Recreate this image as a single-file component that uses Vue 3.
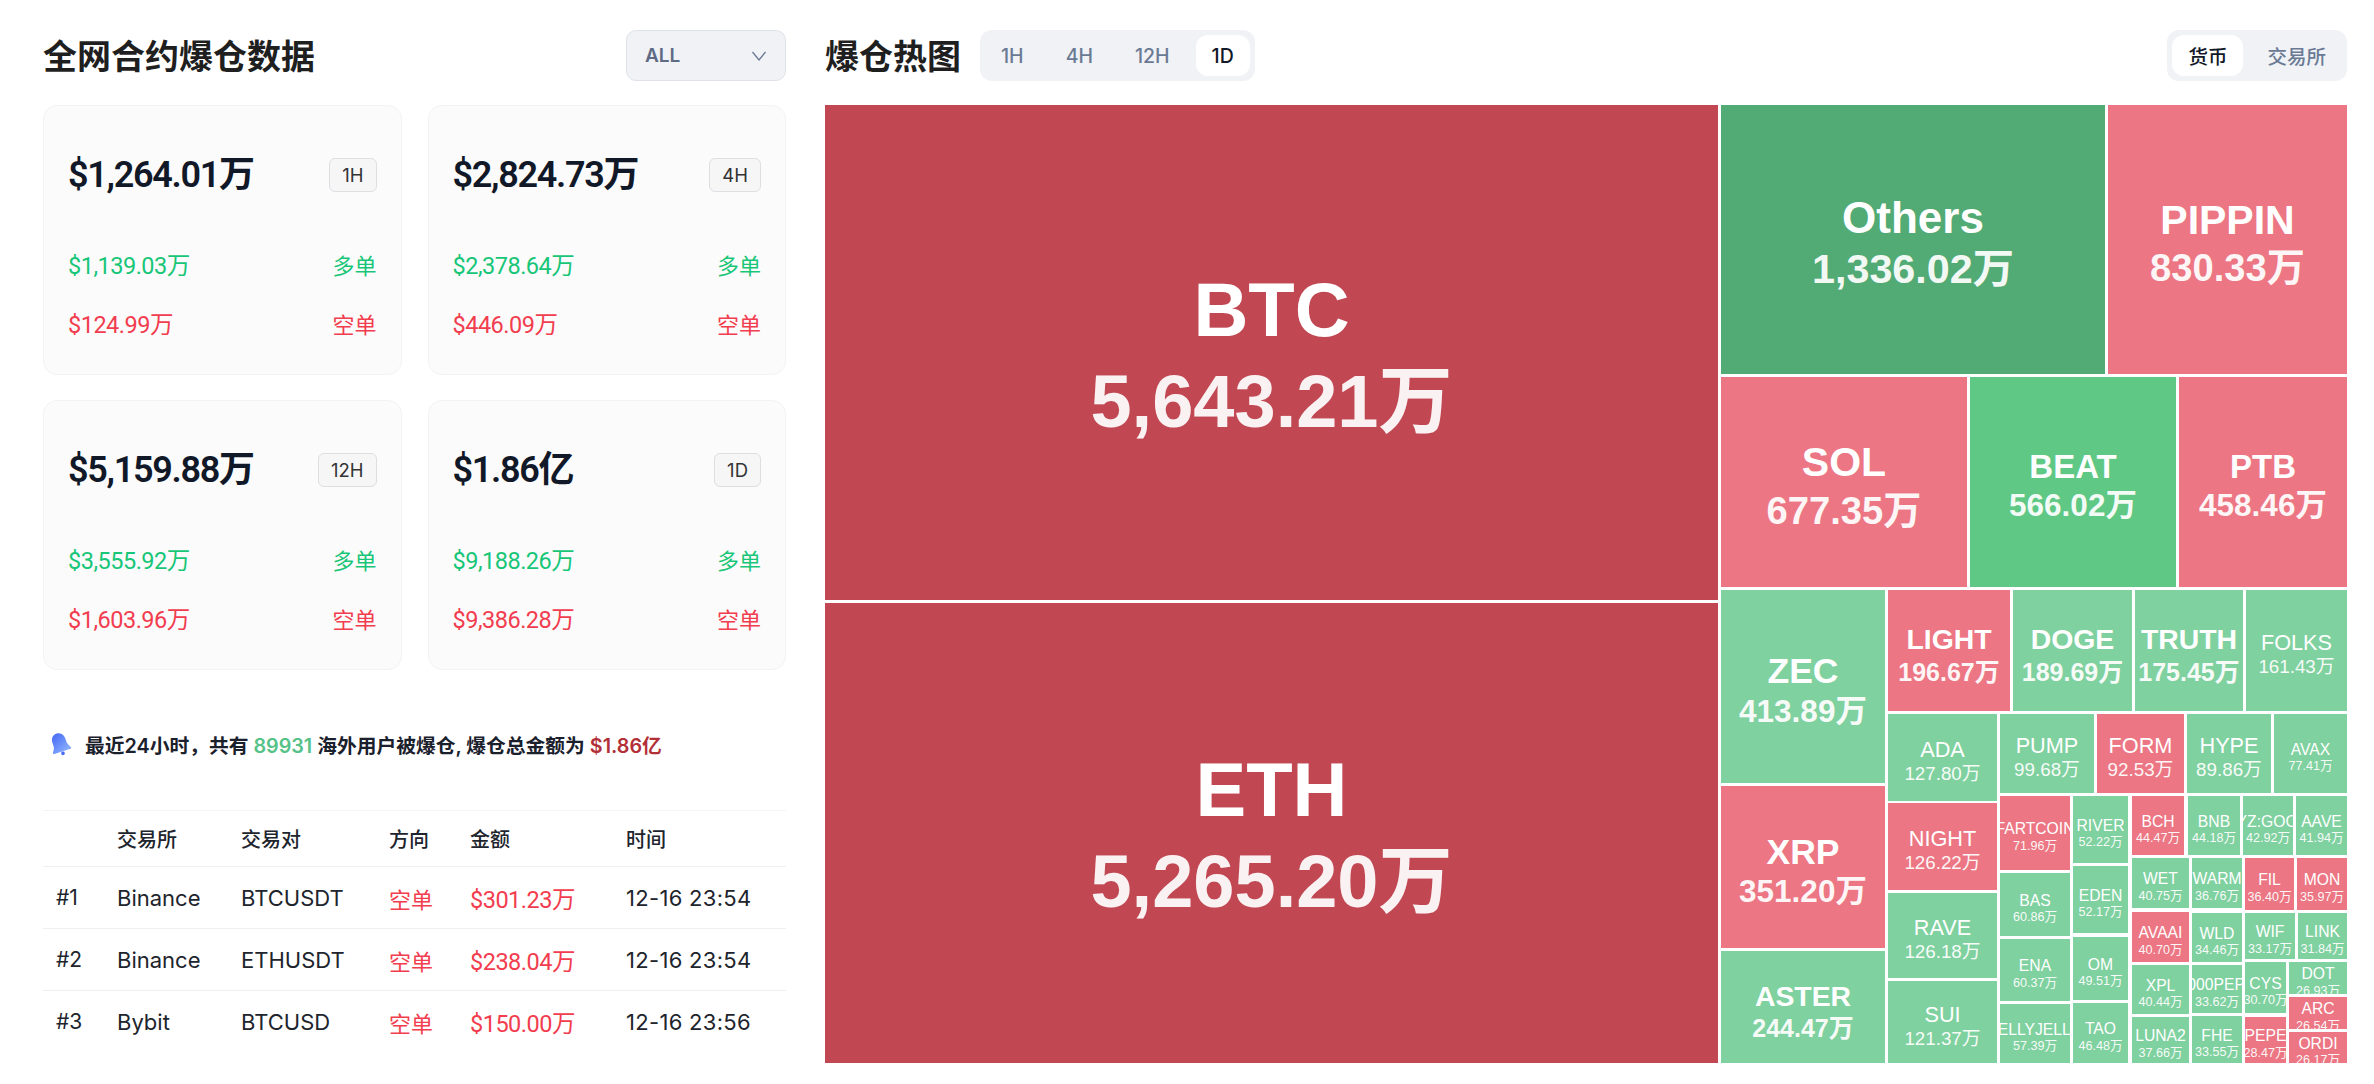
<template>
  <div class="page">
    <section class="left">
      <header class="head">
        <h2 class="title">全网合约爆仓数据</h2>
        <div class="select">
          <span>ALL</span>
          <svg class="chev" width="16" height="10" viewBox="0 0 16 10"><path d="M1.5 1 L8 9 L14.5 1" fill="none" stroke="#6b7a94" stroke-width="1.3" /></svg>
        </div>
      </header>

      <div class="cards">
        <div v-for="c in cards" :key="c.tag" class="card">
          <div class="card-top">
            <span class="amount">{{ c.total }}</span>
            <span class="badge">{{ c.tag }}</span>
          </div>
          <div class="card-row long"><span class="num">{{ c.long }}</span><span class="lab">多单</span></div>
          <div class="card-row short"><span class="num">{{ c.short }}</span><span class="lab">空单</span></div>
        </div>
      </div>

      <div class="notice">
        <svg class="bell" width="22" height="24" viewBox="0 0 22 24">
          <defs>
            <linearGradient id="bellFill" x1="0.2" y1="0" x2="0.7" y2="1">
              <stop offset="0" stop-color="#4668f6" />
              <stop offset="1" stop-color="#86aafc" />
            </linearGradient>
          </defs>
          <g transform="rotate(-18 11 12)">
            <path fill="url(#bellFill)" d="M11 1 C6.6 1 4.2 4.2 4.2 8.4 V12.2 C4.2 14.6 2.6 16.6 1.6 18.2 C1.2 19 1.6 19.8 2.6 19.8 H19.4 C20.4 19.8 20.8 19 20.4 18.2 C19.4 16.6 17.8 14.6 17.8 12.2 V8.4 C17.8 4.2 15.4 1 11 1 Z" />
            <circle cx="11" cy="21.8" r="1.8" fill="#4a6cf6" />
          </g>
        </svg>
        <span>最近24小时，共有 <b class="cnt">89931</b> 海外用户被爆仓, 爆仓总金额为 <b class="sum">$1.86亿</b></span>
      </div>

      <table class="tbl">
        <thead>
          <tr><th class="c0"></th><th class="c1">交易所</th><th class="c2">交易对</th><th class="c3">方向</th><th class="c4">金额</th><th>时间</th></tr>
        </thead>
        <tbody>
          <tr v-for="r in rows" :key="r.rank">
            <td>{{ r.rank }}</td>
            <td>{{ r.ex }}</td>
            <td>{{ r.pair }}</td>
            <td class="red cjk">空单</td>
            <td class="red num">{{ r.amt }}</td>
            <td class="time">{{ r.time }}</td>
          </tr>
        </tbody>
      </table>
    </section>

    <section class="right">
      <header class="head">
        <div class="head-l">
          <h2 class="title">爆仓热图</h2>
          <div class="tabs">
            <span v-for="t in ['1H', '4H', '12H', '1D']" :key="t" class="tab" :class="{ on: t === '1D' }">{{ t }}</span>
          </div>
        </div>
        <div class="tabs tabs-cjk">
          <span class="tab on">货币</span>
          <span class="tab">交易所</span>
        </div>
      </header>

      <div class="map">
        <div
          v-for="n in nodes"
          :key="n.name"
          class="node"
          :class="[n.color, 't' + n.tier]"
          :style="boxOf(n)"
        >
          <span class="nm">{{ n.name }}</span>
          <span class="vl">{{ n.value }}</span>
        </div>
      </div>
    </section>
  </div>
</template>

<script setup>
const cards = [
  { tag: '1H', total: '$1,264.01万', long: '$1,139.03万', short: '$124.99万' },
  { tag: '4H', total: '$2,824.73万', long: '$2,378.64万', short: '$446.09万' },
  { tag: '12H', total: '$5,159.88万', long: '$3,555.92万', short: '$1,603.96万' },
  { tag: '1D', total: '$1.86亿', long: '$9,188.26万', short: '$9,386.28万' }
]

const rows = [
  { rank: '#1', ex: 'Binance', pair: 'BTCUSDT', amt: '$301.23万', time: '12-16 23:54' },
  { rank: '#2', ex: 'Binance', pair: 'ETHUSDT', amt: '$238.04万', time: '12-16 23:54' },
  { rank: '#3', ex: 'Bybit', pair: 'BTCUSD', amt: '$150.00万', time: '12-16 23:56' }
]

// treemap cells: name, value, x0, y0, x1, y1 (page px), colour, text tier
const raw = [
  ['BTC', '5,643.21万', 825, 105, 1718, 600, 'dred', 76],
  ['ETH', '5,265.20万', 825, 603, 1718, 1063, 'dred', 76],
  ['Others', '1,336.02万', 1721, 105, 2105, 374, 'dgreen', 44],
  ['PIPPIN', '830.33万', 2108, 105, 2347, 374, 'pink', 41],
  ['SOL', '677.35万', 1721, 377, 1967, 587, 'pink', 41],
  ['BEAT', '566.02万', 1970, 377, 2176, 587, 'mgreen', 33],
  ['PTB', '458.46万', 2179, 377, 2347, 587, 'pink', 33],
  ['ZEC', '413.89万', 1721, 590, 1885, 783, 'green', 35],
  ['XRP', '351.20万', 1721, 786, 1885, 948, 'pink', 35],
  ['ASTER', '244.47万', 1721, 951, 1885, 1063, 'green', 28],
  ['LIGHT', '196.67万', 1888, 590, 2010, 711, 'pink', 28],
  ['DOGE', '189.69万', 2013, 590, 2132, 711, 'green', 28],
  ['TRUTH', '175.45万', 2135, 590, 2243, 711, 'green', 28],
  ['FOLKS', '161.43万', 2246, 590, 2347, 711, 'green', 22],
  ['ADA', '127.80万', 1888, 714, 1997, 801, 'green', 22],
  ['NIGHT', '126.22万', 1888, 803, 1997, 890, 'pink', 22],
  ['RAVE', '126.18万', 1888, 893, 1997, 978, 'green', 22],
  ['SUI', '121.37万', 1888, 981, 1997, 1063, 'green', 22],
  ['PUMP', '99.68万', 2000, 714, 2094, 793, 'green', 22],
  ['FORM', '92.53万', 2097, 714, 2184, 793, 'pink', 22],
  ['HYPE', '89.86万', 2187, 714, 2271, 793, 'green', 22],
  ['AVAX', '77.41万', 2274, 714, 2347, 793, 'green', 15],
  ['FARTCOIN', '71.96万', 2000, 796, 2070, 870, 'pink', 15],
  ['BAS', '60.86万', 2000, 873, 2070, 936, 'green', 15],
  ['ENA', '60.37万', 2000, 939, 2070, 1001, 'green', 15],
  ['JELLYJELLY', '57.39万', 2000, 1004, 2070, 1063, 'green', 15],
  ['RIVER', '52.22万', 2073, 796, 2128, 863, 'green', 15],
  ['EDEN', '52.17万', 2073, 866, 2128, 933, 'green', 15],
  ['OM', '49.51万', 2073, 937, 2128, 1000, 'green', 15],
  ['TAO', '46.48万', 2073, 1003, 2128, 1063, 'green', 15],
  ['BCH', '44.47万', 2132, 796, 2184, 855, 'pink', 15],
  ['BNB', '44.18万', 2188, 796, 2240, 855, 'green', 15],
  ['XYZ:GOOG', '42.92万', 2243, 796, 2293, 855, 'green', 15],
  ['AAVE', '41.94万', 2296, 796, 2347, 855, 'green', 15],
  ['WET', '40.75万', 2132, 858, 2189, 908, 'green', 15],
  ['WARM', '36.76万', 2192, 858, 2242, 908, 'green', 15],
  ['FIL', '36.40万', 2245, 858, 2294, 910, 'pink', 15],
  ['MON', '35.97万', 2297, 858, 2347, 910, 'pink', 15],
  ['AVAAI', '40.70万', 2132, 912, 2189, 962, 'pink', 15],
  ['WLD', '34.46万', 2192, 913, 2242, 962, 'green', 15],
  ['WIF', '33.17万', 2245, 913, 2295, 959, 'green', 15],
  ['LINK', '31.84万', 2298, 913, 2347, 959, 'green', 15],
  ['XPL', '40.44万', 2132, 965, 2189, 1014, 'green', 15],
  ['1000PEPE', '33.62万', 2192, 965, 2242, 1013, 'green', 15],
  ['CYS', '30.70万', 2245, 962, 2286, 1013, 'green', 15],
  ['DOT', '26.93万', 2289, 962, 2347, 994, 'green', 15],
  ['ARC', '26.54万', 2289, 997, 2347, 1029, 'pink', 15],
  ['ORDI', '26.17万', 2289, 1032, 2347, 1063, 'pink', 15],
  ['PEPE', '28.47万', 2245, 1017, 2286, 1063, 'pink', 15],
  ['LUNA2', '37.66万', 2132, 1017, 2189, 1063, 'green', 15],
  ['FHE', '33.55万', 2192, 1016, 2242, 1063, 'green', 15]
]

const nodes = raw.map(([name, value, x0, y0, x1, y1, color, tier]) => ({ name, value, x0, y0, x1, y1, color, tier }))

const boxOf = (n) => ({
  left: n.x0 - 825 + 'px',
  top: n.y0 - 105 + 'px',
  width: n.x1 - n.x0 + 'px',
  height: n.y1 - n.y0 + 'px'
})
</script>

<style>
html, body { background: #fff; overflow: hidden; }
</style>

<style scoped>
.page {
  display: flex;
  gap: 39px;
  padding: 30px 27px 21px 43px;
  width: 2374px;
  height: 1084px;
  box-sizing: border-box;
  font-family: Inter, "Noto Sans CJK SC", sans-serif;
  color: #1a202c;
}
.left { width: 743px; flex: none; }
.right { flex: 1; min-width: 0; }

.head {
  display: flex;
  align-items: center;
  justify-content: space-between;
  height: 51px;
  margin-bottom: 24px;
}
.head-l { display: flex; align-items: center; gap: 19px; }
.title {
  margin: -2px 0 0;
  font-size: 34px;
  font-weight: 700;
  color: #1f1f1f;
  font-family: "Noto Sans CJK SC", sans-serif;
  line-height: 51px;
}

.select {
  width: 160px;
  height: 51px;
  box-sizing: border-box;
  background: #f0f2f6;
  border: 1px solid #dfe2e8;
  border-radius: 10px;
  padding: 0 18px;
  display: flex;
  align-items: center;
  justify-content: space-between;
  font-size: 19px;
  font-weight: 600;
  color: #5f6b85;
}

.cards {
  display: grid;
  grid-template-columns: 358.5px 358.5px;
  grid-auto-rows: 270px;
  gap: 25px 26px;
}
.card {
  background: #fbfbfc;
  border: 1px solid #f2f3f5;
  border-radius: 14px;
  padding: 0 24px;
}
.card-top {
  display: flex;
  align-items: center;
  justify-content: space-between;
  height: 34px;
  margin-top: 52px;
  margin-bottom: 57px;
}
.amount {
  font-family: Roboto, "Noto Sans CJK SC", sans-serif;
  font-size: 36px;
  font-weight: 600;
  letter-spacing: -1.3px;
  line-height: 34px;
  color: #111827;
}
.badge {
  height: 34px;
  box-sizing: border-box;
  padding: 0 12px;
  display: flex;
  align-items: center;
  background: #f6f6f7;
  border: 1px solid #dedfe2;
  border-radius: 6px;
  font-size: 18.5px;
  color: #333;
}
.card-row {
  display: flex;
  align-items: center;
  justify-content: space-between;
  height: 30px;
  margin-bottom: 29px;
  font-size: 22px;
}
.long { color: #18c678; }
.short { color: #f23d4f; }
.num {
  font-family: Roboto, "Noto Sans CJK SC", sans-serif;
  font-size: 23.5px;
  letter-spacing: -0.5px;
}
.lab { font-family: "Noto Sans CJK SC", sans-serif; }

.notice {
  display: flex;
  align-items: center;
  gap: 14px;
  height: 30px;
  margin-top: 59px;
  margin-bottom: 51px;
  padding-left: 6px;
  font-size: 19.75px;
  font-weight: 600;
  color: #1a202c;
}
.bell { flex: none; }
.cnt { color: #56c288; font-weight: 600; }
.sum { color: #b32f38; font-weight: 600; }

.tbl {
  width: 743px;
  border-collapse: collapse;
  table-layout: fixed;
  font-size: 22px;
  color: #20242c;
}
.tbl th {
  text-align: left;
  font-size: 20px;
  font-weight: 500;
  height: 55px;
  padding: 0;
  border-top: 1px solid #f3f4f6;
}
.tbl td {
  height: 61px;
  padding: 0;
  border-top: 1px solid #eeeff2;
}
.tbl th:first-child, .tbl td:first-child { padding-left: 13px; font-size: 21px; }
.c0 { width: 61px; }
.c1 { width: 124px; }
.c2 { width: 148px; }
.c3 { width: 81px; }
.c4 { width: 156px; }
.red { color: #f23d4f; }
.cjk { font-size: 22px; font-family: "Noto Sans CJK SC", sans-serif; }
.tbl .time { letter-spacing: 0.3px; }

.tabs {
  display: flex;
  gap: 10px;
  height: 51px;
  box-sizing: border-box;
  padding: 5px;
  background: #f0f2f6;
  border-radius: 12px;
}
.tab {
  display: flex;
  align-items: center;
  padding: 0 16px;
  font-size: 19.5px;
  font-weight: 500;
  color: #6b7a94;
  border-radius: 12px;
}
.tab.on { background: #fff; color: #111827; }
.tabs-cjk { gap: 8px; }
.tabs-cjk .tab { font-family: "Noto Sans CJK SC", sans-serif; }

.map {
  position: relative;
  width: 1522px;
  height: 958px;
}
.node {
  position: absolute;
  box-sizing: border-box;
  overflow: hidden;
  display: flex;
  flex-direction: column;
  align-items: center;
  justify-content: center;
  padding-top: 8px;
  color: #fff;
  font-family: "Liberation Sans", "Noto Sans CJK SC", sans-serif;
  line-height: 1.2;
  white-space: nowrap;
}
.vl { opacity: 0.93; }
.dred { background: #c14853; }
.pink { background: #ec7683; }
.dgreen { background: #52aa74; }
.mgreen { background: #5ec884; }
.green { background: #7fd1a0; }

.t76, .t44, .t41, .t35, .t33, .t28 { font-weight: 700; }
.t76 { padding-top: 5px; }
.t76 .nm { font-size: 76px; margin-bottom: 3px; } .t76 .vl { font-size: 74px; }
.t44 .nm { font-size: 44px; } .t44 .vl { font-size: 41.3px; }
.t41 .nm { font-size: 41px; } .t41 .vl { font-size: 38.2px; }
.t35 .nm { font-size: 35.5px; } .t35 .vl { font-size: 31.5px; }
.t33 .nm { font-size: 33px; } .t33 .vl { font-size: 31.5px; }
.t28 .nm { font-size: 28.4px; } .t28 .vl { font-size: 25px; }
.t22 .nm { font-size: 21.7px; } .t22 .vl { font-size: 18.8px; }
.t15 .nm { font-size: 15.7px; } .t15 .vl { font-size: 12.6px; }
</style>
